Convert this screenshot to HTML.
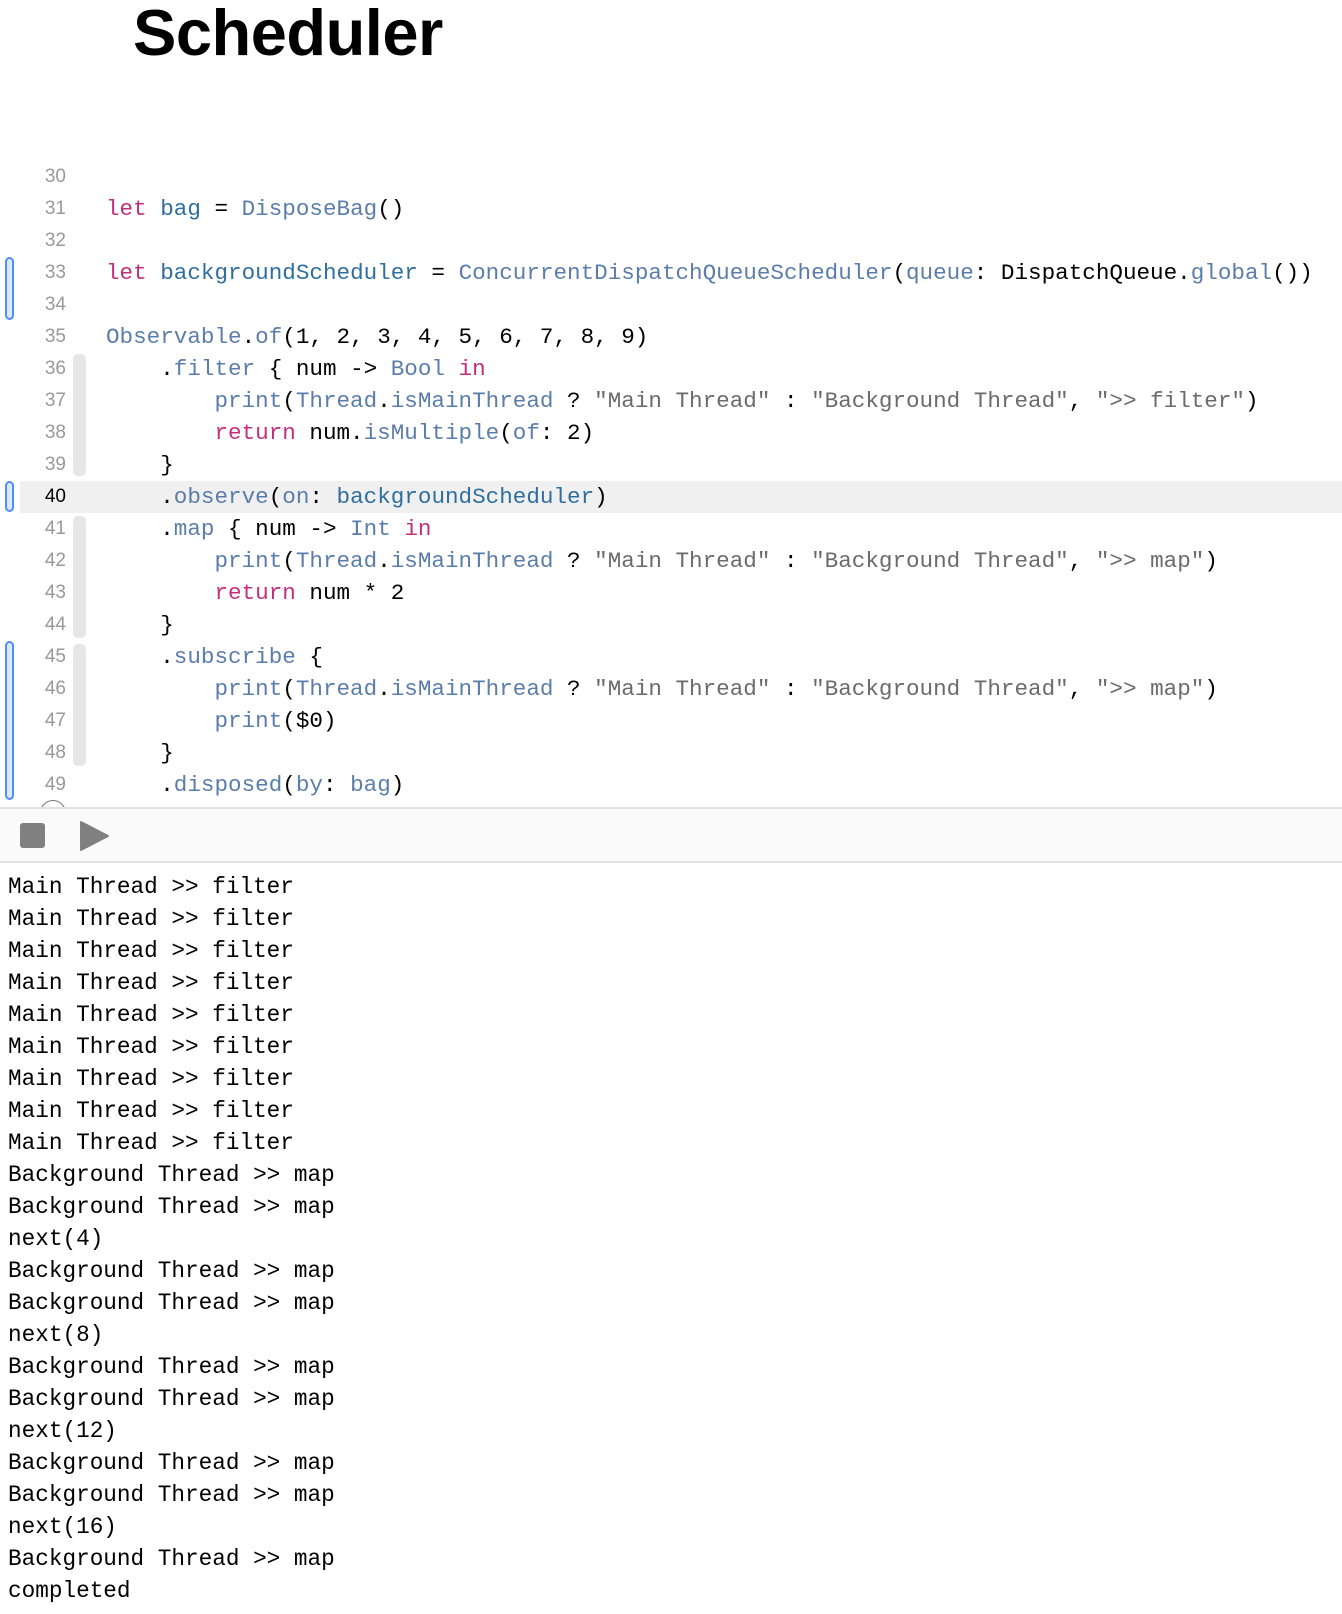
<!DOCTYPE html>
<html><head><meta charset="utf-8"><style>
*{margin:0;padding:0;box-sizing:border-box}
body{width:1342px;height:1614px;background:#fff;position:relative;overflow:hidden;font-family:"Liberation Sans",sans-serif}
h1{position:absolute;left:133px;top:-5px;font-size:65px;font-weight:bold;color:#000;letter-spacing:-0.5px}
.code{position:absolute;top:161px;left:0;width:1342px}
.ln{height:32px;position:relative;white-space:pre;font-family:"Liberation Mono",monospace;font-size:22.6px;line-height:32px;color:#000}
.ln .n{position:absolute;left:0;width:66px;text-align:right;font-family:"Liberation Sans",sans-serif;font-size:19px;color:#999}
.ln .c{position:absolute;left:106px}
.hl{background:#f0f0f0}
.k{color:#c2307b}.v{color:#2f6f9f}.t{color:#5b7dab}.s{color:#6b6b6b}
.bar{position:absolute;left:5px;width:9px;border:2px solid #4f8ff5;background:#dce9fd;border-radius:5px}
.fold{position:absolute;left:73px;width:13px;background:#e6e6e6;border-radius:5px}
.tb{position:absolute;left:0;top:807px;width:1342px;height:56px;background:#fafafa;border-top:2px solid #e2e2e2;border-bottom:2px solid #e2e2e2}
.con{position:absolute;top:871px;left:8px;font-family:"Liberation Mono",monospace;font-size:22.7px;line-height:32px;white-space:pre;color:#000}
</style></head><body>
<h1>Scheduler</h1>
<div class="code">
<div class="ln"><span class="n">30</span></div>
<div class="ln"><span class="n">31</span><span class="c"><span class="k">let</span> <span class="v">bag</span> = <span class="t">DisposeBag</span>()</span></div>
<div class="ln"><span class="n">32</span></div>
<div class="ln"><span class="n">33</span><span class="c"><span class="k">let</span> <span class="v">backgroundScheduler</span> = <span class="t">ConcurrentDispatchQueueScheduler</span>(<span class="t">queue</span>: DispatchQueue.<span class="t">global</span>())</span></div>
<div class="ln"><span class="n">34</span></div>
<div class="ln"><span class="n">35</span><span class="c"><span class="t">Observable</span>.<span class="t">of</span>(1, 2, 3, 4, 5, 6, 7, 8, 9)</span></div>
<div class="ln"><span class="n">36</span><span class="c">    .<span class="t">filter</span> { num -&gt; <span class="t">Bool</span> <span class="k">in</span></span></div>
<div class="ln"><span class="n">37</span><span class="c">        <span class="t">print</span>(<span class="t">Thread</span>.<span class="t">isMainThread</span> ? <span class="s">"Main Thread"</span> : <span class="s">"Background Thread"</span>, <span class="s">"&gt;&gt; filter"</span>)</span></div>
<div class="ln"><span class="n">38</span><span class="c">        <span class="k">return</span> num.<span class="t">isMultiple</span>(<span class="t">of</span>: 2)</span></div>
<div class="ln"><span class="n">39</span><span class="c">    }</span></div>
<div class="ln hl" style="margin-left:20px"><span class="n" style="left:-20px;color:#000">40</span><span class="c" style="left:86px">    .<span class="t">observe</span>(<span class="t">on</span>: <span class="v">backgroundScheduler</span>)</span></div>
<div class="ln"><span class="n">41</span><span class="c">    .<span class="t">map</span> { num -&gt; <span class="t">Int</span> <span class="k">in</span></span></div>
<div class="ln"><span class="n">42</span><span class="c">        <span class="t">print</span>(<span class="t">Thread</span>.<span class="t">isMainThread</span> ? <span class="s">"Main Thread"</span> : <span class="s">"Background Thread"</span>, <span class="s">"&gt;&gt; map"</span>)</span></div>
<div class="ln"><span class="n">43</span><span class="c">        <span class="k">return</span> num * 2</span></div>
<div class="ln"><span class="n">44</span><span class="c">    }</span></div>
<div class="ln"><span class="n">45</span><span class="c">    .<span class="t">subscribe</span> {</span></div>
<div class="ln"><span class="n">46</span><span class="c">        <span class="t">print</span>(<span class="t">Thread</span>.<span class="t">isMainThread</span> ? <span class="s">"Main Thread"</span> : <span class="s">"Background Thread"</span>, <span class="s">"&gt;&gt; map"</span>)</span></div>
<div class="ln"><span class="n">47</span><span class="c">        <span class="t">print</span>($0)</span></div>
<div class="ln"><span class="n">48</span><span class="c">    }</span></div>
<div class="ln"><span class="n">49</span><span class="c">    .<span class="t">disposed</span>(<span class="t">by</span>: <span class="t">bag</span>)</span></div>
</div>
<div class="bar" style="top:257px;height:63px"></div>
<div class="bar" style="top:481px;height:31px"></div>
<div class="bar" style="top:641px;height:159px"></div>
<div class="fold" style="top:354px;height:122px"></div>
<div class="fold" style="top:516px;height:122px"></div>
<div class="fold" style="top:644px;height:122px"></div>
<div style="position:absolute;left:40px;top:800px;width:26px;height:26px;border:1.5px solid #777;border-radius:50%"></div>
<div class="tb">
<div style="position:absolute;left:20px;top:14px;width:25px;height:25px;background:#808080;border-radius:3px"></div>
<svg style="position:absolute;left:80px;top:12px" width="30" height="30" viewBox="0 0 30 30"><path d="M1 1 L28 15 L1 29 Z" fill="#808080" stroke="#808080" stroke-linejoin="round" stroke-width="2"/></svg>
</div>
<div class="con">Main Thread &gt;&gt; filter
Main Thread &gt;&gt; filter
Main Thread &gt;&gt; filter
Main Thread &gt;&gt; filter
Main Thread &gt;&gt; filter
Main Thread &gt;&gt; filter
Main Thread &gt;&gt; filter
Main Thread &gt;&gt; filter
Main Thread &gt;&gt; filter
Background Thread &gt;&gt; map
Background Thread &gt;&gt; map
next(4)
Background Thread &gt;&gt; map
Background Thread &gt;&gt; map
next(8)
Background Thread &gt;&gt; map
Background Thread &gt;&gt; map
next(12)
Background Thread &gt;&gt; map
Background Thread &gt;&gt; map
next(16)
Background Thread &gt;&gt; map
completed</div>
</body></html>
